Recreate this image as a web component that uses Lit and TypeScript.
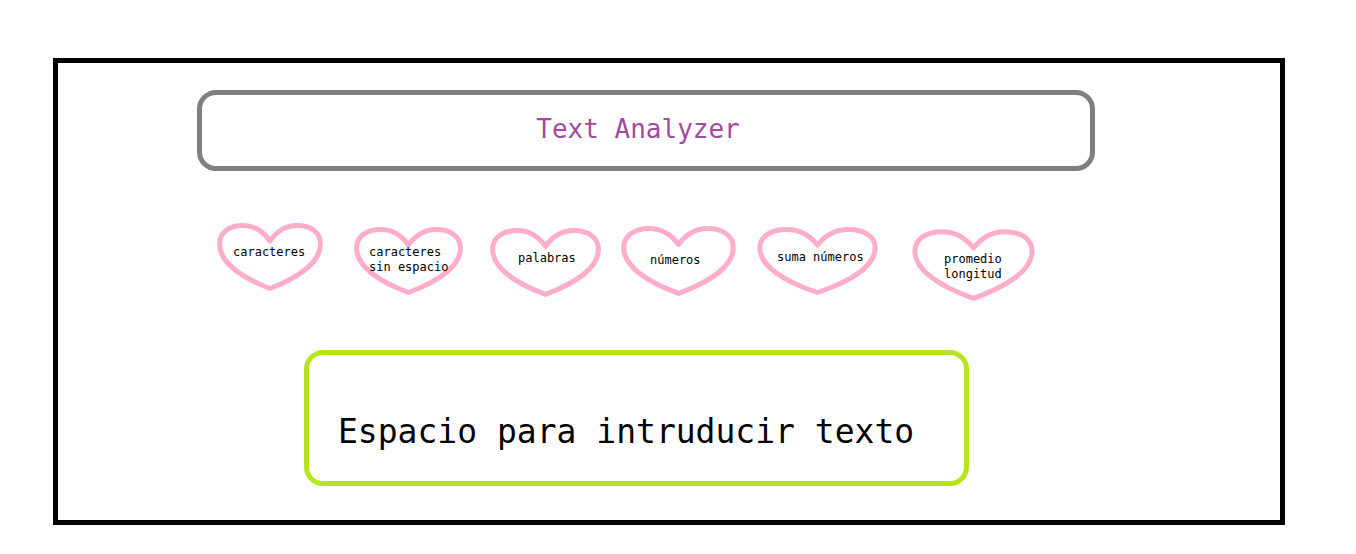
import { LitElement, html, css } from "lit";
import { customElement, property } from "lit/decorators.js";
import { styleMap } from "lit/directives/style-map.js";

interface Metric {
  lines: string[];
  drop: number;
  height: number;
  inset: number;
  top: number;
}

const METRICS: Metric[] = [
  { lines: ["caracteres"], drop: 0, height: 68, inset: 16, top: 22 },
  { lines: ["caracteres", "sin espacio"], drop: 4, height: 68, inset: 15, top: 18 },
  { lines: ["palabras"], drop: 5, height: 69, inset: 28, top: 23 },
  { lines: ["números"], drop: 3, height: 70, inset: 29, top: 27 },
  { lines: ["suma números"], drop: 4, height: 68, inset: 20, top: 23 },
  { lines: ["promedio", "longitud"], drop: 6, height: 72, inset: 32, top: 23 },
];

@customElement("metric-heart")
export class MetricHeart extends LitElement {
  @property({ attribute: false }) metric!: Metric;

  static styles = css`
    :host {
      display: block;
    }
    .heart {
      display: grid;
    }
    .outline {
      grid-area: 1 / 1;
      display: block;
      width: 100%;
      height: 100%;
      min-height: 0;
      overflow: visible;
      fill: none;
      stroke: #ffaec9;
      stroke-width: 5px;
      stroke-linejoin: round;
    }
    .label {
      grid-area: 1 / 1;
      z-index: 1;
      font-size: 12px;
      line-height: 15px;
      white-space: nowrap;
      color: #000;
    }
    .line {
      display: block;
    }
  `;

  render() {
    const { lines, drop, height, inset, top } = this.metric;
    return html`
      <div class="heart" style=${styleMap({ height: `${height}px`, marginTop: `${drop}px` })}>
        <svg class="outline" viewBox="0 0 106 68" preserveAspectRatio="none" aria-hidden="true">
          <path
            vector-effect="non-scaling-stroke"
            d="M53 18 C46 8 37 2.5 26 2.5 C12 2.5 2.5 9.5 2.5 21 C2.5 38 22 53.5 53 65.5 C84 53.5 103.5 38 103.5 21 C103.5 9.5 94 2.5 80 2.5 C69 2.5 60 8 53 18 Z"
          />
        </svg>
        <span class="label" style=${styleMap({ paddingTop: `${top}px`, paddingLeft: `${inset}px` })}
          >${lines.map((line) => html`<span class="line">${line}</span>`)}</span
        >
      </div>
    `;
  }
}

@customElement("app-root")
export class AppRoot extends LitElement {
  static styles = css`
    :host {
      display: block;
      background: #fff;
      font-family: "DejaVu Sans Mono", "Liberation Mono", monospace;
    }
    .frame {
      margin: 58px 71px 29px 53px;
      padding: 27px 0 34px;
      border: 5px solid #000;
    }
    .row {
      display: grid;
    }
    .title-row {
      grid-template-columns: 139fr 898fr 185fr;
    }
    .title {
      grid-column: 2;
      margin: 0;
      padding: 18px 16px 21px 0;
      border: 5px solid #7f7f7f;
      border-radius: 19px;
      font-size: 26px;
      font-weight: 400;
      line-height: 32px;
      text-align: center;
      color: #a349a4;
    }
    .metrics {
      margin: 52px 0 0;
      padding: 0;
      list-style: none;
      grid-template-columns: 159fr 106fr 31fr 109fr 27fr 111fr 20fr 115fr 21fr 121fr 34fr 123fr 245fr;
    }
    .metric {
      grid-row: 1;
    }
    .metric:nth-child(1) {
      grid-column: 2;
    }
    .metric:nth-child(2) {
      grid-column: 4;
    }
    .metric:nth-child(3) {
      grid-column: 6;
    }
    .metric:nth-child(4) {
      grid-column: 8;
    }
    .metric:nth-child(5) {
      grid-column: 10;
    }
    .metric:nth-child(6) {
      grid-column: 12;
    }
    .entry-row {
      margin-top: 49px;
      grid-template-columns: 246fr 665fr 311fr;
    }
    .entry {
      grid-column: 2;
      box-sizing: border-box;
      display: block;
      width: 100%;
      height: 136px;
      margin: 0;
      padding: 57px 24px 28px 29px;
      border: 5px solid #b5e61d;
      border-radius: 19px;
      outline: none;
      resize: none;
      overflow: hidden;
      background: transparent;
      font-family: inherit;
      font-size: 33px;
      line-height: 40px;
      color: #000;
    }
    .entry::placeholder {
      color: #000;
      opacity: 1;
    }
  `;

  render() {
    return html`
      <main class="frame">
        <header class="row title-row">
          <h1 class="title">Text Analyzer</h1>
        </header>
        <ul class="row metrics">
          ${METRICS.map(
            (metric) => html`<li class="metric"><metric-heart .metric=${metric}></metric-heart></li>`
          )}
        </ul>
        <div class="row entry-row">
          <textarea
            class="entry"
            rows="1"
            aria-label="Espacio para intruducir texto"
            placeholder="Espacio para intruducir texto"
          ></textarea>
        </div>
      </main>
    `;
  }
}
